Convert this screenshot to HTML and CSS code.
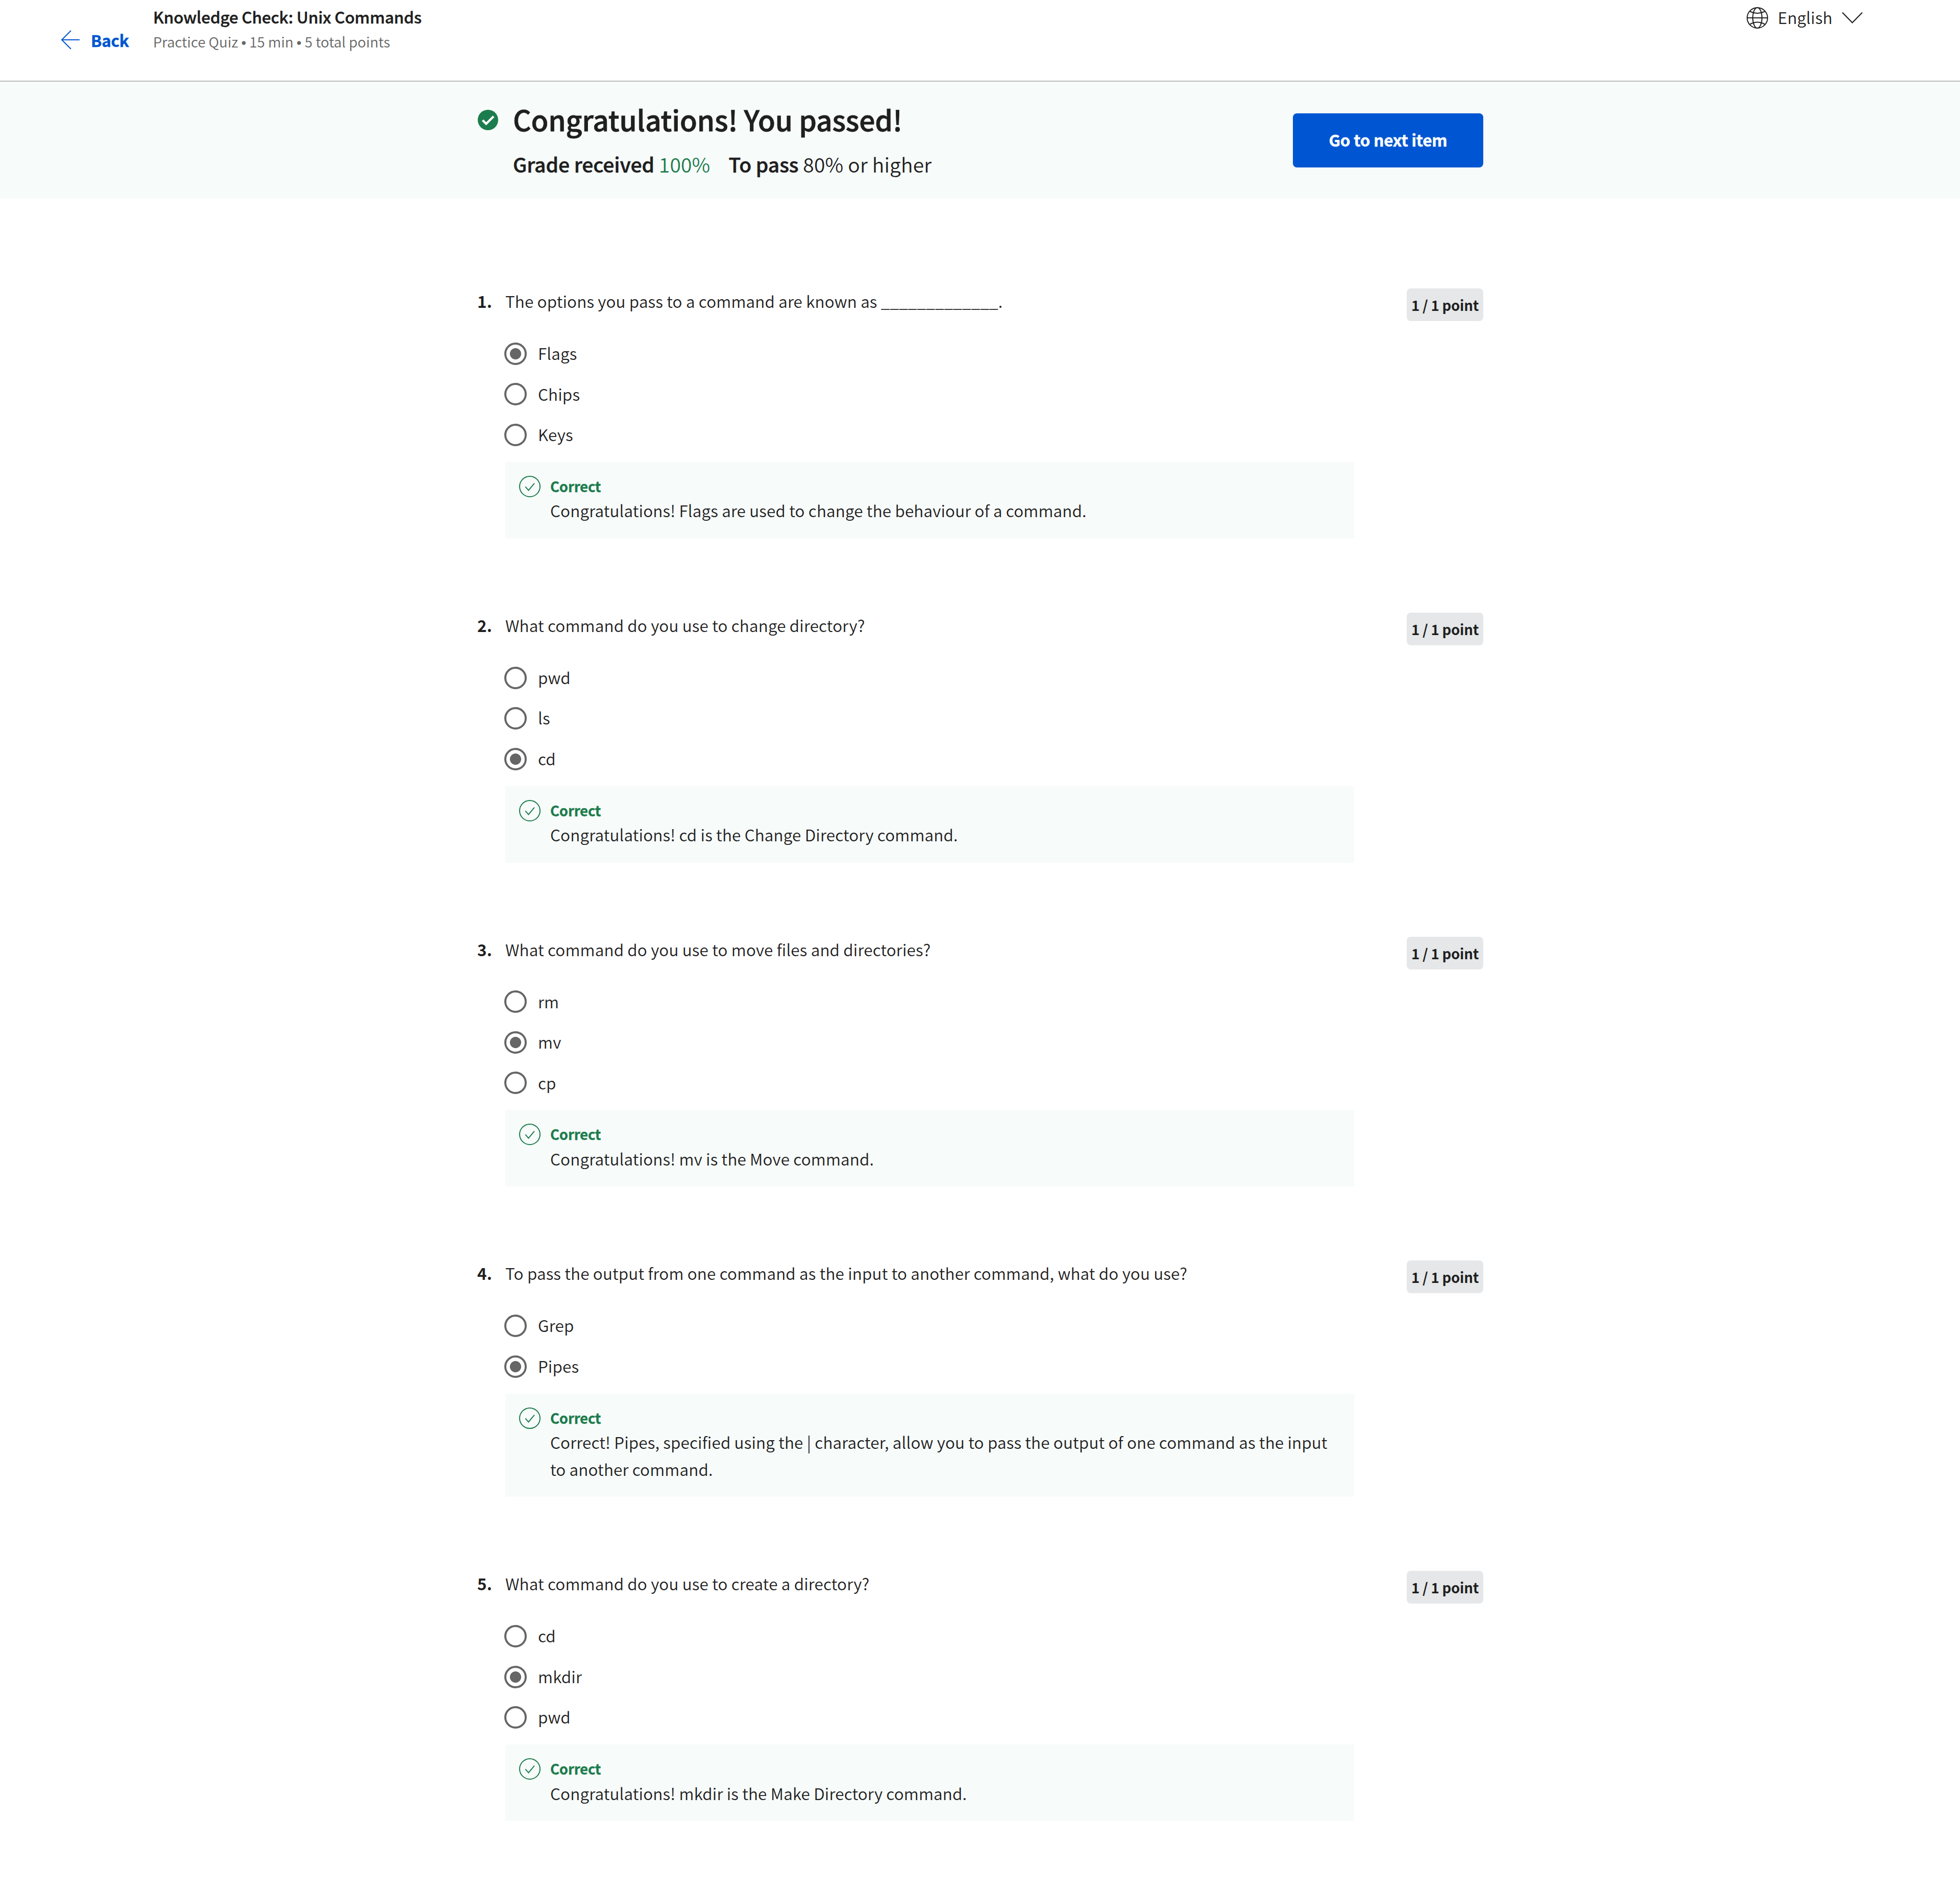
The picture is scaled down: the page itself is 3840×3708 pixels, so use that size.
FILE: index.html
```html
<!DOCTYPE html>
<html lang="en">
<head>
<meta charset="utf-8">
<title>Knowledge Check: Unix Commands</title>
<link rel="stylesheet" href="styles.css">
</head>
<body>
<svg class="defs" width="0" height="0" aria-hidden="true">
  <symbol id="ok" viewBox="0 0 42 42">
    <circle cx="21" cy="21" r="20" fill="none" stroke="currentColor" stroke-width="2"/>
    <path d="M12.3 21.4l6.2 7L30 14.6" fill="none" stroke="currentColor" stroke-width="2"/>
  </symbol>
</svg>
<header class="topbar">
  <a class="back">
    <svg class="back-icon" viewBox="0 0 38 38"><path d="M37 19H2M20 1L2 19l18 18" fill="none" stroke="currentColor" stroke-width="2"/></svg>
    <span>Back</span>
  </a>
  <div class="heading">
    <h1 class="title">Knowledge Check: Unix Commands</h1>
    <p class="subtitle">Practice Quiz <span class="dot">•</span> 15 min <span class="dot">•</span> 5 total points</p>
  </div>
  <div class="language">
    <svg class="globe" viewBox="0 0 42 42"><g fill="none" stroke="currentColor" stroke-width="2"><circle cx="21" cy="21" r="20"/><ellipse cx="21" cy="21" rx="9" ry="20"/><path d="M1 21h40M6.5 8.500q14.500 7 29 0M6.500 33.500q14.500-8 29 0"/></g></svg>
    <span>English</span>
    <svg class="chevron" viewBox="0 0 42 24"><path d="M1.500 1.500L21 21.500 40.500 1.500" fill="none" stroke="currentColor" stroke-width="2.200"/></svg>
  </div>
</header>
<section class="banner">
  <div class="banner-inner">
    <svg class="passed" viewBox="0 0 40 40"><circle cx="20" cy="20" r="20" fill="currentColor"/><path d="M9.500 20.500l7 7L31 13" fill="none" stroke="#fff" stroke-width="4.400"/></svg>
    <div class="result">
      <h2 class="congrats">Congratulations! You passed!</h2>
      <p class="grades"><span><b>Grade received</b> <span class="score">100%</span></span><span><b>To pass</b> 80% or higher</span></p>
    </div>
    <button class="next">Go to next item</button>
  </div>
</section>
<main class="quiz">
  <article class="question">
    <div class="number">1.</div>
    <div class="body">
      <p class="prompt">The options you pass to a command are known as _____________.</p>
      <ul class="options">
        <li class="option"><i class="radio checked"></i><span>Flags</span></li>
        <li class="option"><i class="radio"></i><span>Chips</span></li>
        <li class="option"><i class="radio"></i><span>Keys</span></li>
      </ul>
      <div class="feedback"><svg class="ok"><use href="#ok"/></svg><div><p class="verdict">Correct</p><p class="note">Congratulations! Flags are used to change the behaviour of a command.</p></div></div>
    </div>
    <div class="points">1 / 1 point</div>
  </article>
  <article class="question">
    <div class="number">2.</div>
    <div class="body">
      <p class="prompt">What command do you use to change directory?</p>
      <ul class="options">
        <li class="option"><i class="radio"></i><span>pwd</span></li>
        <li class="option"><i class="radio"></i><span>ls</span></li>
        <li class="option"><i class="radio checked"></i><span>cd</span></li>
      </ul>
      <div class="feedback"><svg class="ok"><use href="#ok"/></svg><div><p class="verdict">Correct</p><p class="note">Congratulations! cd is the Change Directory command.</p></div></div>
    </div>
    <div class="points">1 / 1 point</div>
  </article>
  <article class="question">
    <div class="number">3.</div>
    <div class="body">
      <p class="prompt">What command do you use to move files and directories?</p>
      <ul class="options">
        <li class="option"><i class="radio"></i><span>rm</span></li>
        <li class="option"><i class="radio checked"></i><span>mv</span></li>
        <li class="option"><i class="radio"></i><span>cp</span></li>
      </ul>
      <div class="feedback"><svg class="ok"><use href="#ok"/></svg><div><p class="verdict">Correct</p><p class="note">Congratulations! mv is the Move command.</p></div></div>
    </div>
    <div class="points">1 / 1 point</div>
  </article>
  <article class="question">
    <div class="number">4.</div>
    <div class="body">
      <p class="prompt">To pass the output from one command as the input to another command, what do you use?</p>
      <ul class="options">
        <li class="option"><i class="radio"></i><span>Grep</span></li>
        <li class="option"><i class="radio checked"></i><span>Pipes</span></li>
      </ul>
      <div class="feedback"><svg class="ok"><use href="#ok"/></svg><div><p class="verdict">Correct</p><p class="note">Correct! Pipes, specified using the | character, allow you to pass the output of one command as the input to another command.</p></div></div>
    </div>
    <div class="points">1 / 1 point</div>
  </article>
  <article class="question">
    <div class="number">5.</div>
    <div class="body">
      <p class="prompt">What command do you use to create a directory?</p>
      <ul class="options">
        <li class="option"><i class="radio"></i><span>cd</span></li>
        <li class="option"><i class="radio checked"></i><span>mkdir</span></li>
        <li class="option"><i class="radio"></i><span>pwd</span></li>
      </ul>
      <div class="feedback"><svg class="ok"><use href="#ok"/></svg><div><p class="verdict">Correct</p><p class="note">Congratulations! mkdir is the Make Directory command.</p></div></div>
    </div>
    <div class="points">1 / 1 point</div>
  </article>
</main>
</body>
</html>
```
FILE: styles.css
```css
* { box-sizing: border-box; margin: 0; padding: 0; }
body {
  min-height: 3708px;
  background: #fff;
  color: #1f1f1f;
  font-family: "Noto Sans CJK SC", "Noto Sans", sans-serif;
  font-size: 31.5px;
  font-weight: 350;
  line-height: 52.8px;
  letter-spacing: 0.15px;
}
svg { display: block; flex: none; }
.defs { position: absolute; }
ul { list-style: none; }

.topbar {
  display: flex;
  align-items: flex-start;
  height: 160px;
  padding: 8px 190px 0 119px;
  border-bottom: 2px solid #bbb;
}
.back { display: flex; align-items: center; width: 181px; margin-top: 44px; color: #0056d2; font-weight: 700; letter-spacing: -0.3px; -webkit-text-stroke: 0.5px; }
.back-icon { width: 38px; height: 38px; margin-right: 21px; }
.title { font-size: 31.5px; font-weight: 500; line-height: 48px; letter-spacing: -0.2px; -webkit-text-stroke: 0.5px; }
.subtitle { margin-top: 3px; font-size: 27.6px; line-height: 44px; letter-spacing: 0.06px; color: #666; }
.dot { font-family: "Liberation Sans", sans-serif; font-weight: 400; line-height: 1; }
.language { display: flex; align-items: center; height: 50px; margin-left: auto; }
.globe { width: 42px; height: 42px; margin-right: 19px; margin-top: 4px; }
.chevron { width: 42px; height: 24px; margin-left: 18px; margin-top: 4px; }

.banner { height: 229px; padding-top: 38px; background: #f7fbfa; }
.banner-inner { display: flex; align-items: flex-start; width: 1971px; margin-left: 935px; }
.passed { width: 40px; height: 40px; margin: 17px 29px 0 1px; color: #1d7c4d; }
.congrats { font-size: 55.2px; font-weight: 500; line-height: 70px; letter-spacing: -0.15px; -webkit-text-stroke: 0.8px; }
.grades { display: flex; gap: 36px; margin-top: 20px; font-size: 39.1px; line-height: 66px; }
.grades b { font-weight: 500; letter-spacing: -0.1px; -webkit-text-stroke: 0.6px; }
.score { color: #1d7c4d; }
.next {
  width: 373px;
  height: 106px;
  margin: 24px 0 0 auto;
  padding-bottom: 3px;
  border: 0;
  border-radius: 8px;
  background: #0056d2;
  color: #fff;
  font: 700 31.5px/52.8px "Noto Sans CJK SC", "Noto Sans", sans-serif;
  letter-spacing: -0.2px;
  -webkit-text-stroke: 0.5px;
}

.quiz { width: 1971px; margin-left: 935px; padding-top: 174px; }
.question { display: grid; grid-template-columns: 55px 1663px 150px; column-gap: 0; justify-content: start; margin-bottom: 143px; }
.number { font-weight: 700; }
.points {
  width: 150px;
  height: 64px;
  margin: 2px 0 0 103px;
  border-radius: 8px;
  background: #e5e7e8;
  font-size: 27.600px;
  font-weight: 700;
  line-height: 64px;
  letter-spacing: -0.25px;
  text-align: center;
  white-space: nowrap;
}
.options { margin: 37.200px 0 13.200px; }
.option { display: flex; align-items: center; height: 79.600px; }
.option span { padding-bottom: 2.600px; }
.radio { flex: none; width: 44px; height: 44px; margin: 0 22px 0 -2px; border: 4.400px solid #666; border-radius: 50%; }
.radio.checked { background: radial-gradient(circle, #666 10.600px, transparent 11.400px); }
.feedback { display: flex; padding: 26px 40px 28.600px 27px; background: #f7fbfa; }
.ok { width: 42px; height: 42px; margin: 1px 19px 0 0; color: #1d7c4d; }
.verdict { color: #1d7c4d; font-size: 27.600px; font-weight: 700; line-height: 42.400px; letter-spacing: -0.25px; -webkit-text-stroke: 0.4px; }
```
